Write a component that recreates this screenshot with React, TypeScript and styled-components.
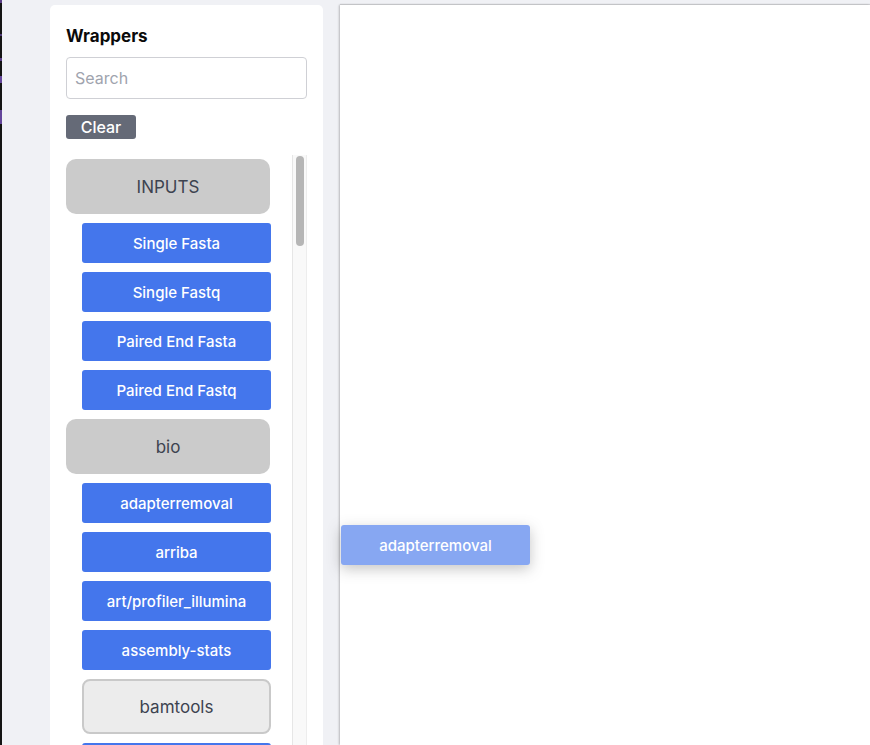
import * as React from "react";
import styled, { createGlobalStyle } from "styled-components";

const GlobalStyle = createGlobalStyle`
  html, body {
    margin: 0;
    padding: 0;
    height: 100%;
    overflow: hidden;
    background: #f0f1f5;
    font-family: Inter, "Liberation Sans", sans-serif;
  }
  #root {
    height: 100%;
  }
`;

const Page = styled.div`
  height: 100vh;
  display: flex;
  align-items: stretch;
  position: relative;
`;

const WindowEdge = styled.div`
  width: 2px;
  flex-shrink: 0;
  background: linear-gradient(
    to bottom,
    #5b3f86 0px,
    #5b3f86 3px,
    #141414 3px,
    #141414 34px,
    #503a78 34px,
    #503a78 36px,
    #141414 36px,
    #141414 58px,
    #5b3f86 58px,
    #5b3f86 61px,
    #141414 61px,
    #141414 76px,
    #64469a 76px,
    #64469a 83px,
    #141414 83px,
    #141414 110px,
    #64469a 110px,
    #64469a 124px,
    #141414 124px
  );
`;

const Sidebar = styled.aside`
  margin: 5px 17px 0 48px;
  width: 273px;
  flex-shrink: 0;
  background: #ffffff;
  border-radius: 5px 5px 0 0;
  padding: 19px 16px 0;
  box-sizing: border-box;
  display: flex;
  flex-direction: column;
  min-height: 0;
`;

const Title = styled.h2`
  margin: 0 0 9px;
  font-size: 17px;
  line-height: 24px;
  font-weight: 700;
  color: #0a0a0a;
`;

const SearchInput = styled.input`
  height: 42px;
  box-sizing: border-box;
  width: 100%;
  border: 1px solid #cfd0d5;
  border-radius: 4px;
  padding: 0 8px;
  font-family: inherit;
  font-size: 16px;
  color: #222;
  outline: none;

  &::placeholder {
    color: #9fa4ae;
  }
`;

const ClearButton = styled.button`
  margin-top: 16px;
  align-self: flex-start;
  width: 70px;
  height: 24px;
  border: none;
  border-radius: 3px;
  background: #656a77;
  color: #ffffff;
  font-family: inherit;
  font-size: 16px;
  font-weight: 500;
  line-height: 24px;
  padding: 0;
`;

const ListArea = styled.div`
  margin-top: 16px;
  flex: 1;
  min-height: 0;
  display: flex;
  justify-content: space-between;
`;

const List = styled.div`
  overflow: hidden;
  padding-top: 4px;
  width: 206px;
`;

const ScrollTrack = styled.div`
  width: 15px;
  box-sizing: border-box;
  background: #f9f9f9;
  border-left: 1px solid #e6e6e6;
  border-right: 1px solid #ededed;
  padding: 1px 2px 0 3px;
`;

const ScrollThumb = styled.div`
  height: 90px;
  border-radius: 4px;
  background: #b6b6b6;
`;

const GroupHeader = styled.div`
  width: 204px;
  height: 55px;
  margin-bottom: 9px;
  border-radius: 10px;
  background: #cbcbcb;
  color: #3d4350;
  font-size: 17px;
  display: flex;
  align-items: center;
  justify-content: center;
  padding-top: 1px;
  box-sizing: border-box;
`;

const Item = styled.div<{ $folder?: boolean }>`
  width: 189px;
  margin-left: 16px;
  margin-bottom: 9px;
  box-sizing: border-box;
  display: flex;
  align-items: center;
  justify-content: center;
  padding-top: 1px;
  height: ${(p) => (p.$folder ? "55px" : "40px")};
  border-radius: ${(p) => (p.$folder ? "8px" : "3px")};
  background: ${(p) => (p.$folder ? "#ececec" : "#4476ec")};
  border: ${(p) => (p.$folder ? "2px solid #c9c9c9" : "none")};
  color: ${(p) => (p.$folder ? "#3d4350" : "#ffffff")};
  font-size: ${(p) => (p.$folder ? "17px" : "15px")};
  font-weight: ${(p) => (p.$folder ? 400 : 500)};
  white-space: nowrap;
`;

const Canvas = styled.main`
  flex: 1;
  margin-top: 5px;
  background: #ffffff;
  box-shadow: -1px 0 2px rgba(0, 0, 0, 0.22), 0 -1px 1px rgba(0, 0, 0, 0.12);
`;

const DragGhost = styled.div`
  position: absolute;
  left: 341px;
  top: 525px;
  width: 189px;
  height: 40px;
  border-radius: 3px;
  background: #4476ec;
  opacity: 0.64;
  color: #ffffff;
  font-size: 15px;
  font-weight: 500;
  display: flex;
  align-items: center;
  justify-content: center;
  padding-top: 1px;
  box-sizing: border-box;
  box-shadow: 0 4px 14px rgba(0, 0, 0, 0.35);
`;

type Entry = { kind: "group" | "item" | "folder"; label: string };

const inputs = ["Single Fasta", "Single Fastq", "Paired End Fasta", "Paired End Fastq"];

// only what fits in the visible part of the list
const bio = [
  "adapterremoval",
  "arriba",
  "art/profiler_illumina",
  "assembly-stats",
  "#bamtools",
  "bamtools/filter",
];

const entries: Entry[] = [
  { kind: "group", label: "INPUTS" },
  ...inputs.map((label) => ({ kind: "item" as const, label })),
  { kind: "group", label: "bio" },
  ...bio.map((name) =>
    name.startsWith("#")
      ? { kind: "folder" as const, label: name.slice(1) }
      : { kind: "item" as const, label: name }
  ),
];

const App = () => {
  return (
    <>
      <GlobalStyle />
      <Page>
        <WindowEdge />
        <Sidebar>
          <Title>Wrappers</Title>
          <SearchInput placeholder="Search" />
          <ClearButton>Clear</ClearButton>
          <ListArea>
            <List>
              {entries.map((e, i) =>
                e.kind === "group" ? (
                  <GroupHeader key={i}>{e.label}</GroupHeader>
                ) : (
                  <Item key={i} $folder={e.kind === "folder"}>
                    {e.label}
                  </Item>
                )
              )}
            </List>
            <ScrollTrack>
              <ScrollThumb />
            </ScrollTrack>
          </ListArea>
        </Sidebar>
        <Canvas />
        <DragGhost>adapterremoval</DragGhost>
      </Page>
    </>
  );
};

export default App;
